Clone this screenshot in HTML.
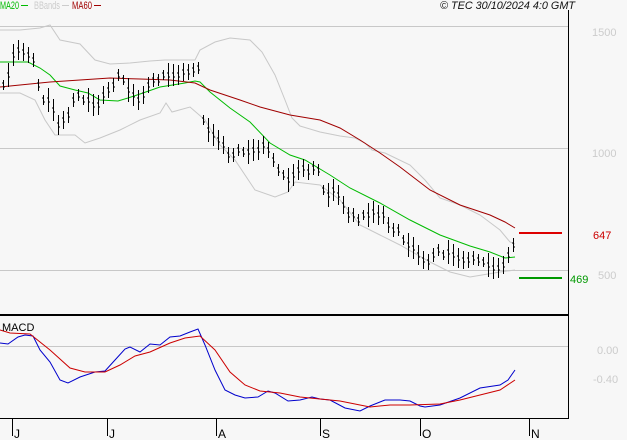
<!DOCTYPE html>
<html><head><style>
html,body{margin:0;padding:0;background:#f7f7f7;width:627px;height:440px;overflow:hidden}
svg{display:block;font-family:"Liberation Sans",sans-serif}
</style></head><body>
<svg id="c" width="627" height="440" viewBox="0 0 627 440" xmlns="http://www.w3.org/2000/svg">
<rect width="627" height="440" fill="#f7f7f7"/>
<g stroke="#c8c8c8" stroke-width="1" fill="none">
<line x1="0" y1="26.5" x2="568" y2="26.5"/>
<line x1="0" y1="148.5" x2="568" y2="148.5"/>
<line x1="0" y1="270.5" x2="568" y2="270.5"/>
<line x1="0" y1="346.5" x2="568" y2="346.5"/>
</g>
<g font-size="11" fill="#cccccc">
<text x="592" y="36">1500</text>
<text x="592" y="157">1000</text>
<text x="598" y="279">500</text>
<text x="597" y="354">0.00</text>
<text x="593" y="383">-0.40</text>
</g>
<g font-size="11">
<text x="0" y="9" fill="#00bb00" textLength="19" lengthAdjust="spacingAndGlyphs">MA20</text>
<line x1="21" y1="5.5" x2="28" y2="5.5" stroke="#00bb00"/>
<text x="34" y="9" fill="#cccccc" textLength="26" lengthAdjust="spacingAndGlyphs">BBands</text>
<line x1="62" y1="5.5" x2="69" y2="5.5" stroke="#cccccc"/>
<text x="72" y="9" fill="#a00000" textLength="20" lengthAdjust="spacingAndGlyphs">MA60</text>
<line x1="94" y1="5.5" x2="101" y2="5.5" stroke="#a00000"/>
<text x="440" y="9" font-style="italic" fill="#111" textLength="135" lengthAdjust="spacingAndGlyphs">© TEC 30/10/2024 4:0 GMT</text>
</g>
<g fill="none" stroke-width="1">
<polyline stroke="#c8c8c8" points="0,30 20,30 40,28 50,25 60,40 80,44 95,60 110,64 130,63 150,61 165,60 195,60 200,50 215,42 230,38 250,40 262,52 275,75 285,100 292,118 300,126 320,132 340,136 355,138 365,143 372,150 385,153 410,165 425,180 440,198 460,205 480,215 500,230 510,242 515,244"/>
<polyline stroke="#c8c8c8" points="0,93 20,93 35,100 45,120 55,135 75,135 85,143 100,138 120,130 140,120 160,113 166,103 172,112 190,107 205,120 220,145 235,160 255,190 275,197 288,192 295,182 320,185 340,200 360,225 380,235 400,245 430,262 450,272 470,277 500,272 515,270"/>
<polyline stroke="#00bb00" points="0,62 28,62 40,68 50,75 60,86 75,90 88,93 100,100 118,101 128,98 140,94 160,87 185,83 195,81 200,82 210,92 230,108 250,122 270,143 290,155 305,160 330,175 350,188 380,203 410,220 440,235 470,246 490,252 505,258 515,257"/>
<polyline stroke="#a00000" points="0,87 20,85 50,82 80,80 110,78 140,79 170,80 195,83 210,90 240,100 260,107 290,115 320,120 340,128 360,140 380,153 400,167 430,190 460,205 490,215 505,222 515,228"/>
</g>
<path id="bars" stroke="#000" stroke-width="1" fill="none" d=""/>
<line x1="519" y1="233" x2="562" y2="233" stroke="#dd0000" stroke-width="2"/>
<text x="593" y="239" font-size="11" fill="#cc0000">647</text>
<line x1="519" y1="278" x2="562" y2="278" stroke="#009900" stroke-width="2"/>
<text x="570" y="283" font-size="11" fill="#009900">469</text>
<g fill="none" stroke-width="1">
<polyline stroke="#0000cc" points="0,343 8,344 18,337 25,335 33,336 40,350 50,362 60,380 68,383 80,377 95,372 105,371 115,360 125,349 130,347 140,352 150,344 160,345 170,337 180,336 190,332 198,329 205,345 215,370 225,390 235,395 245,398 258,397 268,391 275,393 288,401 300,400 312,397 320,399 330,400 345,408 360,411 370,406 385,400 400,400 410,401 420,406 425,407 440,405 460,398 480,388 500,385 508,380 515,370"/>
<polyline stroke="#cc0000" points="0,330 10,333 30,334 50,350 70,368 85,372 105,372 120,365 135,356 150,352 170,343 185,338 200,336 215,350 230,372 245,385 260,391 280,393 300,397 320,399 340,401 360,405 370,407 390,405 410,405 440,404 460,400 480,395 500,390 515,380"/>
</g>
<text x="2" y="331" font-size="11" fill="#000">MACD</text>
<line x1="0" y1="315" x2="569" y2="315" stroke="#000" stroke-width="2"/>
<line x1="568.5" y1="10" x2="568.5" y2="419" stroke="#000" stroke-width="1"/>
<line x1="0" y1="418.5" x2="569" y2="418.5" stroke="#000" stroke-width="1"/>
<g stroke="#000" stroke-width="1">
<line x1="12.5" y1="419" x2="12.5" y2="436"/>
<line x1="107.5" y1="419" x2="107.5" y2="436"/>
<line x1="216.5" y1="419" x2="216.5" y2="436"/>
<line x1="320.5" y1="419" x2="320.5" y2="436"/>
<line x1="420.5" y1="419" x2="420.5" y2="436"/>
<line x1="529.5" y1="419" x2="529.5" y2="436"/>
</g>
<g font-size="12" fill="#000">
<text x="14" y="438">J</text>
<text x="109" y="438">J</text>
<text x="218" y="438">A</text>
<text x="322" y="438">S</text>
<text x="422" y="438">O</text>
<text x="531" y="438">N</text>
</g>
</svg>
<script>
var ys=[85,75,55,50,52,55,60,85,100,100,110,125,120,115,100,95,100,100,105,105,95,90,85,75,80,90,95,100,95,85,80,80,75,75,75,75,72,72,70,68,120,130,135,140,145,155,155,150,152,152,150,150,145,150,160,170,175,180,175,170,168,172,168,170,190,195,190,195,205,215,215,220,215,215,212,215,215,225,230,230,240,245,248,255,260,262,255,250,255,252,255,258,260,260,258,260,262,265,268,268,265,255,245];
var d="";
for(var i=0;i<ys.length;i++){var x=3+i*5+0.5,y=ys[i],h=5+((i*7)%8);
d+="M"+x+","+(y-h)+"V"+(y+h)+"M"+(x-1.5)+","+(y-2)+"H"+x+"M"+x+","+(y+2)+"H"+(x+1.5);}
document.getElementById("bars").setAttribute("d",d);
</script>
</body></html>
